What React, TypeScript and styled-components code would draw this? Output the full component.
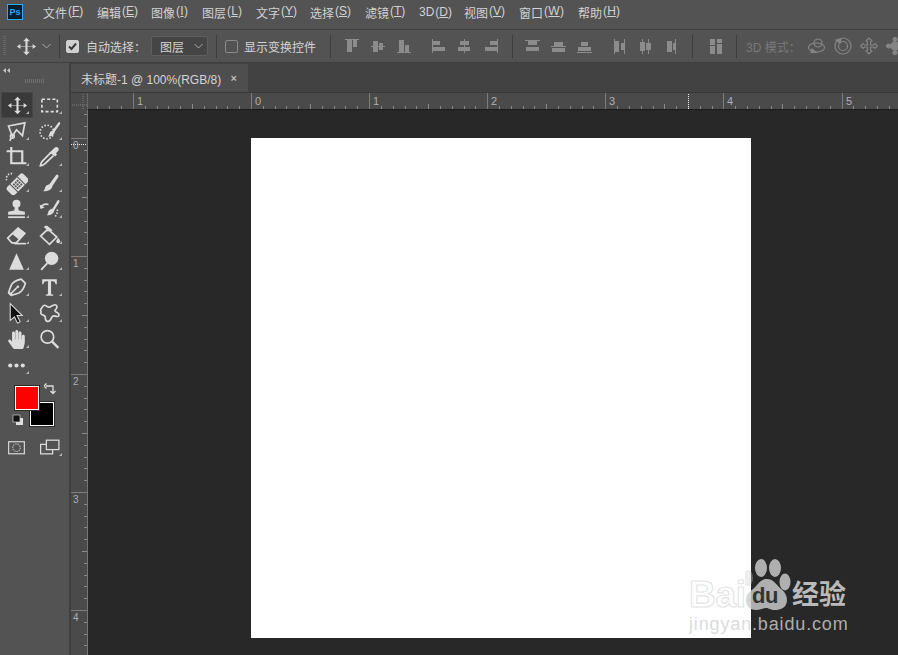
import React from "react";
import styled, { createGlobalStyle } from "styled-components";
import { FaHandPaper } from "react-icons/fa";

const Global = createGlobalStyle`
  html, body { margin: 0; padding: 0; height: 100%; background: #535353; overflow: hidden; }
  #root { height: 100%; }
`;
const FONT = `"Liberation Sans", "Noto Sans CJK SC", sans-serif`;

const Page = styled.div`
  width: 898px; height: 655px; display: flex; flex-direction: column; overflow: hidden; position: relative;
  font-family: ${FONT}; font-size: 12px; color: #d4d4d4; background: #535353;
`;
const MenuBar = styled.div`
  height: 29px; display: flex; align-items: center; flex: none; background: #535353; padding-left: 7px;
  border-bottom: 1px solid #3f3f3f; box-sizing: content-box;
`;
const AppLogo = styled.div`
  width: 14px; height: 14px; margin-right: 20px; border: 1px solid #31a8ff; background: #001e36; color: #31a8ff;
  font-size: 9px; line-height: 14px; text-align: center; font-weight: bold; flex: none; margin-bottom: 6px;
`;
const MenuItems = styled.div`display: flex; gap: 14px; align-items: center; height: 100%; padding-bottom: 5px; box-sizing: border-box;`;
const MenuItem = styled.span<{ $w: number }>`
  white-space: nowrap; color: #d2d2d2; width: ${(p) => p.$w}px; display: flex;
  u { text-underline-offset: 1px; }
`;
const MenuKey = styled.span`flex: 1; display: flex; justify-content: space-between; padding-left: 1px;`;
const OptionsBar = styled.div`
  height: 32px; display: flex; align-items: center; flex: none; background: #535353; border-bottom: 1px solid #3f3f3f;
  overflow: hidden; padding-left: 3px;
`;
const Grip = styled.div`
  width: 3px; height: 20px; flex: none;
  background: repeating-linear-gradient(to bottom, #666 0 1px, transparent 1px 2px);
`;
const MoveWrap = styled.div`width: 22px; height: 22px; margin-left: 9px; flex: none; color: #d8d8d8; display: flex; align-items: center; justify-content: center;`;
const Chevron = styled.svg`width: 9px; height: 6px; flex: none; fill: none; stroke: #a8a8a8; stroke-width: 1;`;
const OptChevron = styled(Chevron)`margin-left: 5px;`;
const Sep = styled.div<{ $l: number; $r: number }>`
  width: 1px; height: 23px; background: #3d3d3d; flex: none; margin: 0 ${(p) => p.$r}px 0 ${(p) => p.$l}px;
`;
const Check = styled.div<{ $on?: boolean }>`
  width: 13px; height: 13px; flex: none; border-radius: 2px; box-sizing: border-box; display: flex; align-items: center; justify-content: center;
  background: ${(p) => (p.$on ? "#d0d0d0" : "transparent")}; border: 1px solid ${(p) => (p.$on ? "#d0d0d0" : "#8a8a8a")};
`;
const OptLabel = styled.span<{ $dim?: boolean; $l: number }>`
  white-space: nowrap; margin-left: ${(p) => p.$l}px; flex: none; color: ${(p) => (p.$dim ? "#787878" : "#d4d4d4")};
`;
const Select = styled.div`
  width: 57px; height: 20px; margin-left: 5px; box-sizing: border-box; background: #454545; border: 1px solid #5f5f5f; border-radius: 2px;
  display: flex; align-items: center; justify-content: space-between; padding: 0 4px 0 8px; flex: none;
`;
const AlignGroup = styled.div<{ $gap: number; $l?: number }>`
  display: flex; gap: ${(p) => p.$gap}px; margin-left: ${(p) => p.$l ?? 0}px; align-items: center; flex: none;
`;
const AlignIcon = styled.svg`width: 15px; height: 15px; fill: #8c8c8c; flex: none;`;
const Mode3D = styled.svg`width: 18px; height: 18px; flex: none; fill: none; stroke: #858585; stroke-width: 1.2;`;
const Main = styled.div`flex: 1; display: flex; min-height: 0;`;
const ToolPanel = styled.div`
  width: 69px; flex: none; background: #535353; border-right: 2px solid #3f3f3f; display: flex; flex-direction: column;
`;
const PanelHead = styled.div`
  height: 29px; flex: none; display: flex; flex-direction: column; align-items: center;
`;
const Collapse = styled.svg`align-self: flex-start; width: 7px; height: 5px; margin: 5px 0 0 3px; fill: #c4c4c4;`;
const PanelGrip = styled.div`
  width: 19px; height: 4px; margin-top: 6px; background: repeating-linear-gradient(to right, #6e6e6e 0 1px, transparent 1px 2px);
`;
const ToolGrid = styled.div`display: grid; grid-template-columns: 33px 33px; grid-auto-rows: 26px;`;
const Tool = styled.div<{ $active?: boolean; $corner?: boolean }>`
  position: relative; display: flex; align-items: center; justify-content: center; color: #dcdcdc;
  margin-left: ${(p) => (p.$active ? "1px" : "0")}; border-radius: 3px;
  background: ${(p) => (p.$active ? "#3a3a3a" : "transparent")};
  box-shadow: ${(p) => (p.$active ? "inset 0 0 0 1px #464646" : "none")};
  &::after {
    content: ""; display: ${(p) => (p.$corner === false ? "none" : "block")}; position: absolute; right: 4px; bottom: 4px;
    border-left: 3px solid transparent; border-bottom: 3px solid #b4b4b4;
  }
`;
const ToolSvg = styled.svg`width: 23px; height: 23px; fill: currentColor; stroke: none; flex: none;`;
const Swatches = styled.div`height: 46px; margin-top: 3px; position: relative; flex: none;`;
const Swatch = styled.div<{ $c: string; $x: number; $y: number; $z: number }>`
  position: absolute; left: ${(p) => p.$x}px; top: ${(p) => p.$y}px; width: 24px; height: 24px; box-sizing: border-box;
  background: ${(p) => p.$c}; border: 1px solid #fff; outline: 1px solid #2a2a2a; z-index: ${(p) => p.$z};
`;
const SwapIcon = styled.svg`position: absolute; left: 44px; top: 2px; width: 13px; height: 13px; fill: none; stroke: #dcdcdc; stroke-width: 1.3;`;
const DefaultIcon = styled.svg`position: absolute; left: 12px; top: 33px; width: 12px; height: 12px;`;
const ModeRow = styled.div`display: grid; grid-template-columns: 33px 33px; height: 26px; margin-top: 7px;`;

const Workspace = styled.div`flex: 1; display: flex; flex-direction: column; min-width: 0;`;
const TabBar = styled.div`
  height: 28px; flex: none; background: #424242; border-bottom: 1px solid #383838; display: flex; align-items: flex-end; padding-top: 1px; box-sizing: content-box;
`;
const Tab = styled.div`
  width: 177px; height: 28px; box-sizing: border-box; background: #4e4e4e; display: flex; align-items: center; padding: 0 10px; justify-content: space-between;
  color: #d4d4d4; white-space: nowrap;
`;
const TabClose = styled.span`font-size: 11px; font-weight: bold; color: #bcbcbc; line-height: 1; margin-right: 1px;`;
const RulerTop = styled.svg`display: block; flex: none; width: 827px; height: 17px; background: #4a4a4a;`;
const Body = styled.div`flex: 1; display: flex; min-height: 0;`;
const RulerLeft = styled.svg`display: block; flex: none; width: 17px; height: 545px; background: #4a4a4a;`;
const Canvas = styled.div`flex: 1; background: #282828; position: relative; overflow: hidden; padding: 28px 0 0 163px;`;
const Doc = styled.div`width: 500px; height: 500px; background: #fff;`;

const Watermark = styled.div`
  position: absolute; left: 689px; top: 557px; width: 170px; display: flex; flex-direction: column; color: rgba(210,210,210,.8); z-index: 5; pointer-events: none;
`;
const WmTop = styled.div`display: flex; align-items: flex-start; height: 58px;`;
const WmBai = styled.span`
  font-family: "Liberation Sans", sans-serif; font-weight: bold; font-size: 37px; line-height: 36px; margin-top: 20px; width: 56px; flex: none;
  color: rgba(255,255,255,.15); -webkit-text-stroke: 1.2px rgba(215,215,215,.7); letter-spacing: -.3px;
`;
const WmPaw = styled.div`position: relative; width: 47px; height: 58px; flex: none;`;
const WmPawSvg = styled.svg`position: absolute; inset: 0; width: 47px; height: 58px; fill: rgba(205,205,205,.82);`;
const WmDu = styled.span`
  position: absolute; left: 7px; top: 26px; font-weight: bold; font-size: 22px; line-height: 26px; color: #333; letter-spacing: -.5px; z-index: 1;
`;
const WmCn = styled.span`
  font-family: "Noto Sans CJK SC", sans-serif; font-weight: 700; font-size: 27px; line-height: 30px; margin-top: 21px; flex: none; color: #bababa;
`;
const WmUrl = styled.div`font-size: 18px; line-height: 20px; letter-spacing: .85px; white-space: nowrap; margin-top: -1px;`;

const menus: [string, string, number][] = [
  ["文件", "F", 40], ["编辑", "E", 40], ["图像", "I", 37], ["图层", "L", 40], ["文字", "Y", 40], ["选择", "S", 41],
  ["滤镜", "T", 40], ["3D", "D", 31], ["视图", "V", 41], ["窗口", "W", 45], ["帮助", "H", 42],
];

const MoveGlyph = () => (
  <ToolSvg viewBox="-2.2 -2.2 26.4 26.4">
    <path d="M11 1l3.800 4h-2.600v5.800H18V8.200l4 2.800-4 2.800v-2.600h-5.800V17H14.800L11 21l-3.800-4h2.600v-5.800H4v2.600L0 11l4-2.800v2.600h5.800V5H7.200z" />
  </ToolSvg>
);

const line = { fill: "none", stroke: "currentColor", strokeWidth: 1.6 } as const;
const D = ({ children }: { children: React.ReactNode }) => <ToolSvg viewBox="0 0 22 22">{children}</ToolSvg>;

const tools: { k: string; icon: React.ReactNode; active?: boolean; corner?: boolean }[] = [
  { k: "move", active: true, icon: <MoveGlyph /> },
  { k: "marquee", icon: <D><rect x="3.700" y="5" width="14.800" height="11.800" {...line} strokeDasharray="3 2" /></D> },
  { k: "lasso", icon: <D><path d="M3.300 5.700L19 2.700 16.700 15 11 9.300l-4 6.200z" {...line} /><circle cx="7" cy="15.500" r="1.800" {...line} /><path d="M6 17l-1.500 3" {...line} /></D> },
  { k: "quick", icon: <D><circle cx="8.500" cy="11.500" r="6.500" {...line} strokeDasharray="1.500 1.600" /><path d="M20.500 2c.9.700.9 1.700.2 2.600l-5.100 7c-.4 2.800-2.700 4.300-6.100 4.300 1.600-1.500 1.200-3.800 2.700-5l1.800-.8 5-6.900c.5-.8 1-1.500 1.500-1.200z" /></D> },
  { k: "crop", icon: <D><path d="M1.500 5h15v12M6 1v15.500h14.500" {...line} strokeWidth={2.100} /></D> },
  { k: "dropper", icon: <D><path d="M12 6.500l-8 8.200c-1 1-1.400 2.400-1.700 4.200 1.600-.2 3.200-.7 4.200-1.700l8.300-8.100" {...line} strokeWidth={1.700} /><path d="M10.800 6.300l2-1.600 1-1 2-2c1-.9 2.500-.9 3.400 0 .9.900.9 2.300 0 3.200l-2 2 1 1.300-1.800 1.800z" /></D> },
  { k: "heal", icon: <D><g transform="rotate(-45 11.500 12) translate(-.5 0)"><rect x="1.500" y="7" width="22" height="10.500" rx="2.500" /><g fill="#535353"><circle cx="10" cy="9.800" r="1" /><circle cx="12.500" cy="9.800" r="1" /><circle cx="15" cy="9.800" r="1" /><circle cx="10" cy="12.300" r="1" /><circle cx="12.500" cy="12.300" r="1" /><circle cx="15" cy="12.300" r="1" /><circle cx="10" cy="14.800" r="1" /><circle cx="12.500" cy="14.800" r="1" /><circle cx="15" cy="14.800" r="1" /><rect x="7" y="7" width="1" height="10.500" /><rect x="17" y="7" width="1" height="10.500" /></g></g><path d="M1.500 8A5 5 0 0 1 8 1.800" {...line} strokeDasharray="1.400 1.400" /></D> },
  { k: "brush", icon: <D><path d="M18.800 2.600c1 .6 1.100 1.600.4 2.600l-5.400 8.100c-.4 3-3.400 5.200-8.800 5.200 1.900-1.700 1.300-4.200 3-5.600l2.900-1.300 5.900-8c.7-1 1.400-1.300 2-1z" /></D> },
  { k: "stamp", icon: <D><circle cx="11" cy="5.500" r="3.800" /><path d="M9.500 8.500h3l.6 3.500 5.900 1.200V16H3v-2.800L8.900 12z" /><rect x="3" y="17.500" width="16" height="1.700" /></D> },
  { k: "history", icon: <D><path d="M19.800 2c.9.600 1 1.400.4 2.300l-4.600 7.500c-.2 2.600-2.800 4.900-7 4.900 1.300-1.900 1-4.300 2.600-5.400l2.800-1.200 4.300-7.200c.5-.8 1-1.200 1.500-.9z" /><path d="M2.500 9.500C4 6.500 7 5.500 10 6.200" {...line} /><path d="M1.500 6.300l1 4.200 3.800-1.400z" /><path d="M18.500 11a8 8 0 0 1-2.500 7" {...line} strokeDasharray="1.400 1.400" /></D> },
  { k: "eraser", icon: <D><path d="M2.500 13.500L12.500 4l6.500 5-8.200 9H6.500z" {...line} /><path d="M12.500 4l6.500 5-5.500 6-6.300-5.300z" /><path d="M9 18.800h11" {...line} /></D> },
  { k: "bucket", icon: <D><path d="M9.500 5l8.500 7.500-7 7L2.500 11.500z" {...line} /><path d="M7 2.500l3 4.500" {...line} /><path d="M5.500 3.200c.6-1.600 2.400-2 3.600-1.200L14 6l-1.400 1z" /><path d="M19.300 13.200c1 1.400 1.800 2.600 1.800 3.400a1.800 1.800 0 0 1-3.600 0c0-.8.800-2 1.800-3.400z" /></D> },
  { k: "gradient", icon: <D><path d="M11 3l7 16H4z" /></D> },
  { k: "dodge", icon: <D><circle cx="13" cy="8" r="6.400" /><path d="M9 12.500L3 19" {...line} strokeWidth={1.800} /></D> },
  { k: "pen", icon: <D><path d="M15.500 3l4 4c-1 3.600-3 7.600-6.200 9.200L6.400 18.500 3.500 15.500 6 8.800C7.500 5.800 12 3.800 15.500 3z" {...line} /><path d="M5 17.500l6.500-6.500" {...line} /><circle cx="12.300" cy="10.200" r="1.200" /><path d="M4 15l-1.400 1.400 3 3L7 18z" /></D> },
  { k: "text", icon: <D><path d="M4 3h14v5h-1.200c-.3-2-1-3-3-3H12.500v11.500c0 1 .6 1.200 2 1.300V19h-7v-1.200c1.400-.1 2-.3 2-1.300V5H8.200c-2 0-2.700 1-3 3H4z" /></D> },
  { k: "select", icon: <D><path d="M5 1.500l11.500 11.500h-5l3 6-2.600 1.200-2.900-6L5 17.500z" fill="#111" stroke="#dcdcdc" strokeWidth="1" /></D> },
  { k: "shape", icon: <D><path d="M7.500 3.500c1.600 1.500 2.800 2 4.500 1 2-1.200 3.700-2.500 5.300-1.500 1.600 1.200.7 3-.5 4.300-.9 1-.7 1.700.6 2.300 2 1 3.400 2.200 2.300 3.700-1 1.300-2.700.4-4.200 0-1.200-.3-2 .4-2.600 1.900-.7 1.800-1.800 3.800-4 3.300-2.400-.6-1.600-3-2.100-4.500-.3-1-1.200-1.200-2.200-1.500-1.700-.6-2.400-1.700-1.700-3.400C1.500 7 3 6.800 3.800 5.300 4.500 4 5.700 2.300 7.500 3.500z" {...line} /></D> },
  { k: "hand", icon: <FaHandPaper size={19} /> },
  { k: "zoom", corner: false, icon: <D><circle cx="9" cy="8.500" r="6" {...line} strokeWidth={1.600} /><path d="M13.500 13l6 6" {...line} strokeWidth={2.200} /></D> },
  { k: "more", icon: <D><circle cx="5" cy="11" r="2" /><circle cx="11" cy="11" r="2" /><circle cx="17" cy="11" r="2" /></D> },
];

type Bar = [number, number, number, number];
const A = ({ b }: { b: Bar[] }) => (
  <AlignIcon viewBox="0 0 15 15">
    {b.map((r, i) => <rect key={i} x={r[0]} y={r[1]} width={r[2]} height={r[3]} />)}
  </AlignIcon>
);
const aligns1: Bar[][] = [
  [[0, 0, 14, 1], [2, 1, 5, 12], [8, 1, 4, 7]],
  [[0, 7, 14, 1], [2, 2, 5, 11], [8, 4, 4, 7]],
  [[0, 13, 14, 1], [2, 1, 5, 12], [8, 6, 4, 7]],
];
const aligns2: Bar[][] = [
  [[0, 0, 1, 14], [1, 2, 7, 4], [1, 8, 12, 4]],
  [[6, 0, 1, 14], [2, 2, 9, 4], [0, 8, 12, 4]],
  [[13, 0, 1, 14], [6, 2, 7, 4], [1, 8, 12, 4]],
];
const aligns3: Bar[][] = [
  [[0, 1, 15, 1], [3, 2, 9, 4], [1, 8, 13, 4]],
  [[0, 7, 15, 1], [3, 3, 9, 4], [1, 9, 13, 4]],
  [[0, 13, 15, 1], [4, 3, 7, 4], [1, 8, 13, 4]],
];
const aligns4: Bar[][] = [
  [[1, 0, 1, 15], [2, 2, 4, 11], [8, 4, 4, 7], [11, 0, 1, 15]],
  [[3, 0, 1, 15], [1, 3, 5, 9], [9, 0, 1, 15], [7, 4, 5, 7]],
  [[10, 0, 1, 15], [2, 2, 5, 11], [8, 4, 3, 7]],
];

const TopRuler = () => {
  const U = 118.1;
  const O = 180;
  const marks: React.ReactNode[] = [];
  for (let i = -2; i < 6; i++) {
    const x = Math.round(O + i * U);
    if (x > 16) {
      marks.push(<rect key={`m${i}`} x={x} y={0} width={1} height={16} fill="#7c7c7c" />);
      marks.push(<text key={`t${i}`} x={x + 4} y={12} fontSize={11} fill="#b0b0b0" fontFamily="Liberation Sans">{Math.abs(i)}</text>);
    }
    for (let j = 1; j < 10; j++) {
      const tx = Math.round(O + (i + j / 10) * U);
      if (tx > 17) marks.push(<rect key={`k${i}-${j}`} x={tx} y={j === 5 ? 11 : 13} width={1} height={j === 5 ? 5 : 3} fill="#8a8a8a" />);
    }
  }
  return (
    <RulerTop>
      {marks}
      <rect x={17} y={16} width={810} height={1} fill="#1c1c1c" />
      <rect x={16} y={0} width={1} height={16} fill="#6a6a6a" />
      <path d="M1 12h15" stroke="#7e7e7e" strokeDasharray="1 1" />
      <path d="M12 1v15" stroke="#7e7e7e" strokeDasharray="1 1" />
      <path d="M617.500 1v15" stroke="#eee" strokeDasharray="1 1" />
    </RulerTop>
  );
};
const LeftRuler = () => {
  const U = 118;
  const O = 28;
  const marks: React.ReactNode[] = [];
  for (let i = 0; i < 5; i++) {
    const y = O + i * U;
    marks.push(<rect key={`m${i}`} x={0} y={y} width={16} height={1} fill="#7c7c7c" />);
    marks.push(<text key={`t${i}`} x={2} y={y + 11} fontSize={10} fill="#a9b0b8" fontFamily="Liberation Sans">{i}</text>);
    for (let j = -2; j < 10; j++) {
      if (j === 0) continue;
      const ty = Math.round(y + (j / 10) * U);
      if (ty > 0) marks.push(<rect key={`k${i}-${j}`} x={j === 5 ? 11 : 13} y={ty} width={j === 5 ? 5 : 3} height={1} fill="#8a8a8a" />);
    }
  }
  return (
    <RulerLeft>
      {marks}
      <rect x={16} y={0} width={1} height={545} fill="#767676" />
      <path d="M0 34.500h16" stroke="#e8e8e8" strokeDasharray="1 1" />
    </RulerLeft>
  );
};

export default function App() {
  return (
    <Page>
      <Global />
      <MenuBar>
        <AppLogo>Ps</AppLogo>
        <MenuItems>
          {menus.map(([t, k, w]) => (
            <MenuItem key={k} $w={w}><span>{t}</span><MenuKey><span>(</span><u>{k}</u><span>)</span></MenuKey></MenuItem>
          ))}
        </MenuItems>
      </MenuBar>
      <OptionsBar>
        <Grip />
        <MoveWrap><MoveGlyph /></MoveWrap>
        <OptChevron viewBox="0 0 9 6"><path d="M.5 1l4 4 4-4" /></OptChevron>
        <Sep $l={8} $r={6} />
        <Check $on>
          <svg width="11" height="11" viewBox="0 0 11 11"><path d="M2 5.500l2.500 2.500L9 2.500" fill="none" stroke="#3a3a3a" strokeWidth="2" /></svg>
        </Check>
        <OptLabel $l={7}>自动选择：</OptLabel>
        <Select>
          图层
          <Chevron viewBox="0 0 9 6"><path d="M.5 1l4 4 4-4" /></Chevron>
        </Select>
        <Sep $l={8} $r={8} />
        <Check />
        <OptLabel $l={6}>显示变换控件</OptLabel>
        <Sep $l={14} $r={14} />
        <AlignGroup $gap={11}>{aligns1.map((b, i) => <A key={i} b={b} />)}</AlignGroup>
        <AlignGroup $gap={11} $l={20}>{aligns2.map((b, i) => <A key={i} b={b} />)}</AlignGroup>
        <Sep $l={13} $r={12} />
        <AlignGroup $gap={11}>{aligns3.map((b, i) => <A key={i} b={b} />)}</AlignGroup>
        <AlignGroup $gap={11} $l={21}>{aligns4.map((b, i) => <A key={i} b={b} />)}</AlignGroup>
        <Sep $l={12} $r={16} />
        <A b={[[1, 0, 5, 6], [1, 7, 5, 8], [8, 0, 5, 4], [8, 5, 5, 10]]} />
        <Sep $l={12} $r={9} />
        <OptLabel $dim $l={0}>3D 模式：</OptLabel>
        <AlignGroup $gap={8} $l={7}>
          <Mode3D viewBox="0 0 18 18"><circle cx="10" cy="6" r="4" /><ellipse cx="8.500" cy="10.500" rx="8" ry="4.500" /><path d="M4 12l4 3.500H3z" fill="#858585" /></Mode3D>
          <Mode3D viewBox="0 0 18 18"><circle cx="9" cy="9" r="8" /><circle cx="9" cy="9" r="4.500" /><path d="M2 3l5-1-1 4z" fill="#858585" /></Mode3D>
          <Mode3D viewBox="0 0 18 18"><path d="M9 1l3 3-1.500 1v3h3L15 6.500l2.500 2.500-2.500 2.500-1.500-1.500h-3v3l1.500 1L9 17l-3-3 1.500-1v-3h-3L3 11.500.5 9 3 6.500 4.500 8h3V5L6 4z" /></Mode3D>
          <Mode3D viewBox="0 0 18 18"><circle cx="9" cy="9" r="4" fill="#858585" /><circle cx="9" cy="2.500" r="2" fill="#858585" /><circle cx="2.500" cy="9" r="2" fill="#858585" /><circle cx="9" cy="15.500" r="2" fill="#858585" /><circle cx="15.500" cy="9" r="2" fill="#858585" /></Mode3D>
        </AlignGroup>
      </OptionsBar>
      <Main>
        <ToolPanel>
          <PanelHead>
            <Collapse viewBox="0 0 7 5"><path d="M3 0v5L0 2.500zM7 0v5L4 2.500z" /></Collapse>
            <PanelGrip />
          </PanelHead>
          <ToolGrid>
            {tools.map((t) => (
              <Tool key={t.k} $active={t.active} $corner={t.corner}>{t.icon}</Tool>
            ))}
          </ToolGrid>
          <Swatches>
            <Swatch $c="#ff0000" $x={15} $y={5} $z={2} />
            <Swatch $c="#000000" $x={30} $y={21} $z={1} />
            <SwapIcon viewBox="0 0 13 13"><path d="M2 3h7v7M0 3l2.500-2.500M0 3l2.500 2.500M6.500 8l2.500 2.500L11.500 8" /></SwapIcon>
            <DefaultIcon viewBox="0 0 12 12"><rect x="4" y="4" width="7" height="7" fill="#e0e0e0" /><rect x="1" y="1" width="7" height="7" fill="#111" stroke="#ccc" strokeWidth=".7" /></DefaultIcon>
          </Swatches>
          <ModeRow>
            <Tool $corner={false}>
              <D><rect x="3.500" y="5.500" width="15" height="11.500" {...line} strokeWidth={1.100} /><circle cx="11" cy="11.200" r="3.600" {...line} strokeWidth={1} strokeDasharray="1.100 1.100" /></D>
            </Tool>
            <Tool>
              <D><rect x="8" y="4" width="12" height="9" {...line} strokeWidth={1.200} /><path d="M8 8H2.500v9H14v-4" {...line} strokeWidth={1.200} /></D>
            </Tool>
          </ModeRow>
        </ToolPanel>
        <Workspace>
          <TabBar>
            <Tab>
              未标题-1 @ 100%(RGB/8)
              <TabClose>×</TabClose>
            </Tab>
          </TabBar>
          <TopRuler />
          <Body>
            <LeftRuler />
            <Canvas>
              <Doc />
            </Canvas>
          </Body>
        </Workspace>
      </Main>
      <Watermark>
        <WmTop>
          <WmBai>Bai</WmBai>
          <WmPaw>
            <WmPawSvg viewBox="0 0 47 58">
              <ellipse cx="16" cy="11" rx="6" ry="9" />
              <ellipse cx="30" cy="11" rx="6" ry="9" />
              <ellipse cx="40" cy="25" rx="5.500" ry="8.500" />
              <ellipse cx="3" cy="21" rx="5" ry="8" opacity=".45" />
              <path d="M22 22c6 0 9 5 13 9 4 3 7 7 7 12 0 8-7 10-12 10-5 0-6-2-9-2s-5 2-10 2C5 53 1 49 1 43c0-5 3-8 7-11 4-3 7-10 14-10z" />
            </WmPawSvg>
            <WmDu>du</WmDu>
          </WmPaw>
          <WmCn>经验</WmCn>
        </WmTop>
        <WmUrl>jingyan.baidu.com</WmUrl>
      </Watermark>
    </Page>
  );
}
